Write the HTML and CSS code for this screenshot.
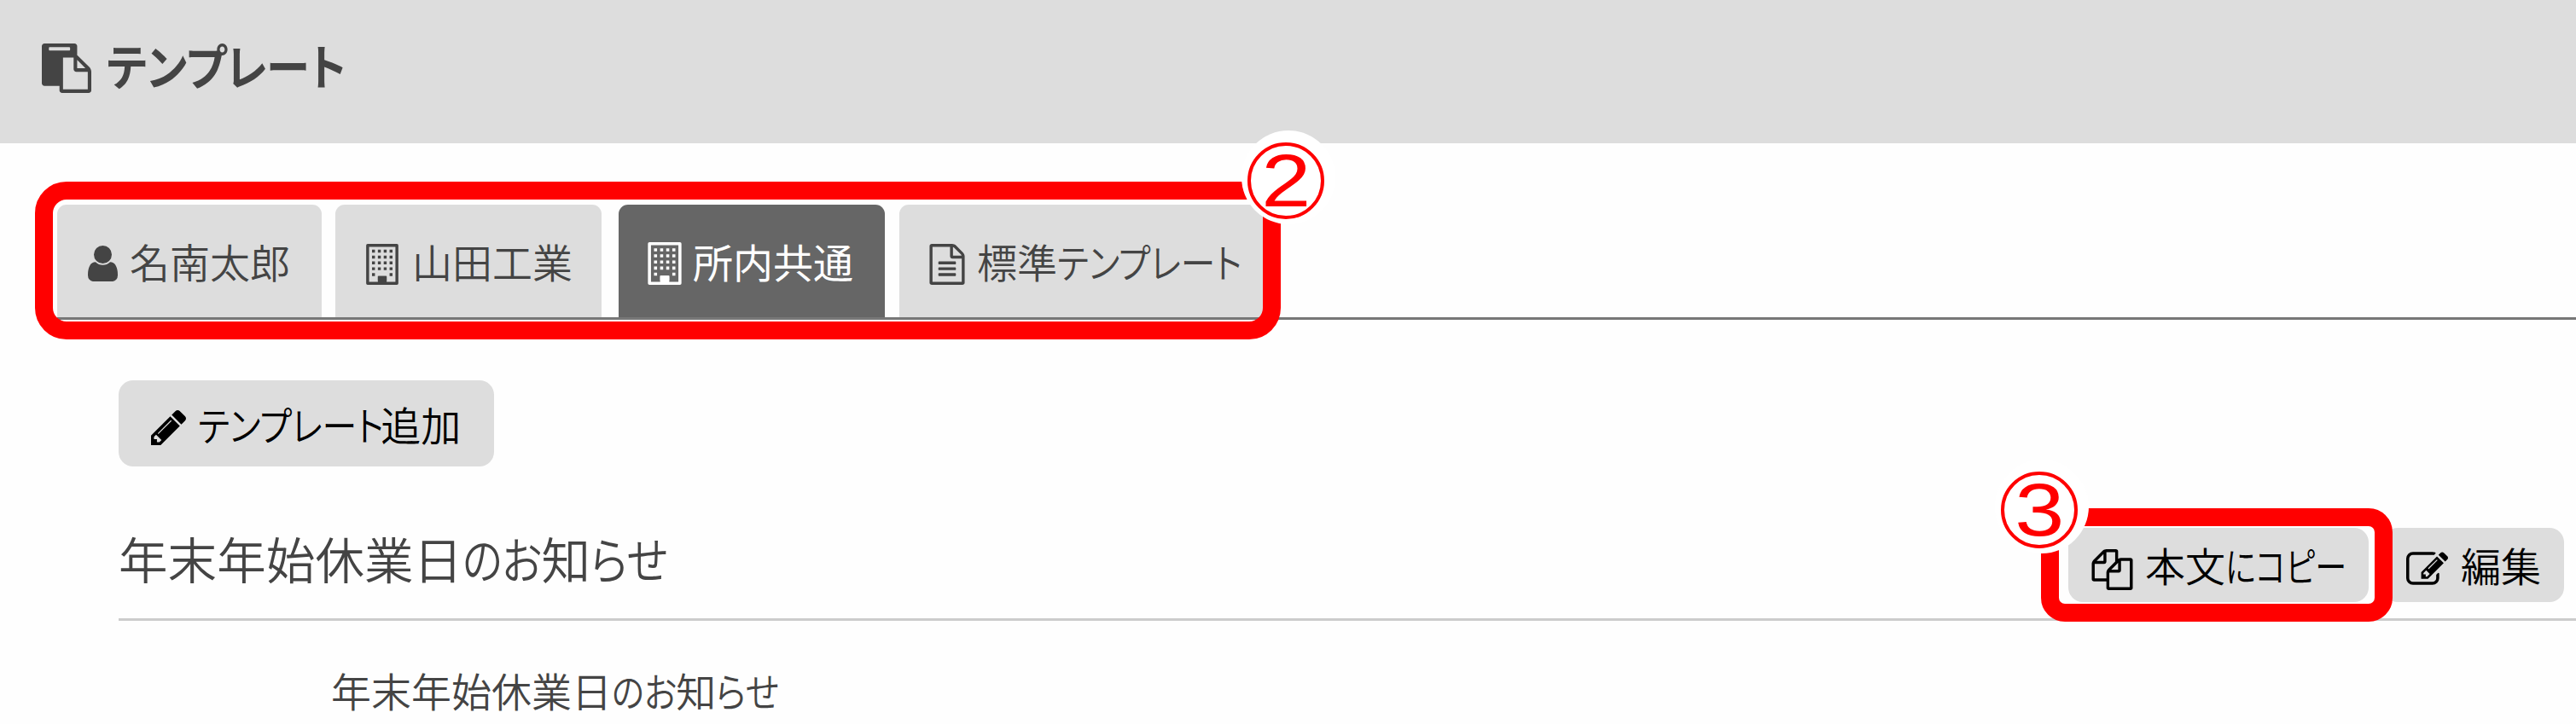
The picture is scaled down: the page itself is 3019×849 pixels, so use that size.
FILE: index.html
```
<!DOCTYPE html>
<html lang="ja">
<head>
<meta charset="utf-8">
<title>テンプレート</title>
<link rel="stylesheet" href="styles.css">
</head>
<body>
<svg class="defs" width="0" height="0">
  <symbol id="building" viewBox="192 0 1408 1792">
    <path fill-rule="evenodd" d="M256 0h1280q64 0 64 64v1664q0 64-64 64h-1280q-64 0-64-64v-1664q0-64 64-64zM320 128v1536h384v-224q0-32 32-32h320q32 0 32 32v224h384v-1536z"/>
    <path d="M704 1408h384v200h-384z"/>
    <path d="M448 256h128v128h-128zM704 256h128v128h-128zM960 256h128v128h-128zM1216 256h128v128h-128zM448 512h128v128h-128zM704 512h128v128h-128zM960 512h128v128h-128zM1216 512h128v128h-128zM448 768h128v128h-128zM704 768h128v128h-128zM960 768h128v128h-128zM1216 768h128v128h-128zM448 1024h128v128h-128zM704 1024h128v128h-128zM960 1024h128v128h-128zM1216 1024h128v128h-128zM448 1280h128v128h-128zM1216 1280h128v128h-128z"/>
  </symbol>
</svg>
<header class="header">
  <svg class="icon icon-paste" viewBox="0 0 1792 1792"><path d="M768 1664h896v-640h-416q-40 0-68-28t-28-68v-416h-384v1152zm256-1440v-64q0-13-9.5-22.5t-22.5-9.5h-704q-13 0-22.5 9.5t-9.5 22.5v64q0 13 9.5 22.5t22.5 9.5h704q13 0 22.5-9.5t9.5-22.5zm256 672h299l-299-299v299zm512 128v672q0 40-28 68t-68 28h-960q-40 0-68-28t-28-68v-160h-544q-40 0-68-28t-28-68v-1344q0-40 28-68t68-28h1088q40 0 68 28t28 68v328q21 13 36 28l408 408q28 28 48 76t20 88z"/></svg>
  <h1 class="title"><span class="kana">テンプレート</span></h1>
</header>
<nav class="tabs">
  <a class="tab tab-user"><svg class="icon icon-user" viewBox="256 128 1280 1536"><path d="M1536 1399q0 109-62.5 187t-150.5 78h-854q-88 0-150.5-78t-62.5-187q0-85 8.5-160.5t31.5-152 58.5-131 94-89 134.5-34.5q131 128 313 128t313-128q76 0 134.5 34.5t94 89 58.5 131 31.5 152 8.5 160.5zm-256-887q0 159-112.5 271.5t-271.5 112.5-271.5-112.5-112.5-271.5 112.5-271.5 271.5-112.5 271.5 112.5 112.5 271.5z"/></svg><span class="label">名南太郎</span></a>
  <a class="tab tab-client"><svg class="icon icon-building"><use href="#building"/></svg><span class="label">山田工業</span></a>
  <a class="tab tab-office active"><svg class="icon icon-building"><use href="#building"/></svg><span class="label">所内共通</span></a>
  <a class="tab tab-standard"><svg class="icon icon-file" viewBox="128 0 1536 1792"><path d="M1596 380q28 28 48 76t20 88v1152q0 40-28 68t-68 28h-1344q-40 0-68-28t-28-68v-1600q0-40 28-68t68-28h896q40 0 88 20t76 48zm-444-244v376h376q-10-29-22-41l-313-313q-12-12-41-22zm384 1528v-1024h-416q-40 0-68-28t-28-68v-416h-768v1536h1280zM512 800q0-32 32-32h704q32 0 32 32v64q0 32-32 32h-704q-32 0-32-32zM512 1056q0-32 32-32h704q32 0 32 32v64q0 32-32 32h-704q-32 0-32-32zM512 1312q0-32 32-32h704q32 0 32 32v64q0 32-32 32h-704q-32 0-32-32z"/></svg><span class="label">標準<span class="kana">テンプレート</span></span></a>
</nav>
<main class="main">
  <button class="button add"><svg class="icon icon-pencil" viewBox="128 149 1515 1515"><path d="M491 1536l91-91-235-235-91 91v107h128v128h107zm523-928q0-22-22-22-10 0-17 7l-542 542q-7 7-7 17 0 22 22 22 10 0 17-7l542-542q7-7 7-17zm-54-192l416 416-832 832h-416v-416zm683 96q0 53-37 90l-166 166-416-416 166-165q36-38 90-38 53 0 91 38l235 234q37 39 37 91z"/></svg><span class="label"><span class="kana k6">テンプレート</span>追加</span></button>
  <section class="row">
    <h2 class="heading">年末年始休業日<span class="kana k2">のお</span>知<span class="kana">らせ</span></h2>
    <div class="actions">
      <button class="button copy"><svg class="icon icon-files" viewBox="0 0 1792 1792"><path d="M1696 384q40 0 68 28t28 68v1216q0 40-28 68t-68 28h-960q-40 0-68-28t-28-68v-288h-544q-40 0-68-28t-28-68v-672q0-40 20-88t48-76l408-408q28-28 76-48t88-20h416q40 0 68 28t28 68v328q68-40 128-40h416zm-544 213l-299 299h299v-299zm-640-384l-299 299h299v-299zm196 647l316-316v-416h-384v416q0 40-28 68t-68 28h-416v640h512v-256q0-40 20-88t48-76zm956 804v-1152h-384v416q0 40-28 68t-68 28h-416v640h896z"/></svg><span class="label">本文<span class="kana k4">にコピー</span></span></button>
      <button class="button edit"><svg class="icon icon-edit" viewBox="0 128 1784 1408"><path d="M888 1184l116-116-152-152-116 116v56h96v96h56zm440-720q-16-16-33 1l-350 350q-17 17-1 33t33-1l350-350q17-17 1-33zm80 594v190q0 119-84.5 203.5t-203.5 84.5h-832q-119 0-203.5-84.5t-84.5-203.5v-832q0-119 84.5-203.5t203.5-84.5h832q63 0 117 25 15 7 18 23 3 17-9 29l-49 49q-14 14-32 8-23-6-45-6h-832q-66 0-113 47t-47 113v832q0 66 47 113t113 47h832q66 0 113-47t47-113v-126q0-13 9-22l64-64q15-15 35-7t20 29zm-96-738l288 288-672 672h-288v-288zm444 132l-92 92-288-288 92-92q28-28 68-28t68 28l152 152q28 28 28 68t-28 68z"/></svg><span class="label">編集</span></button>
    </div>
  </section>
  <p class="body-text">年末年始休業日<span class="kana k2">のお</span>知<span class="kana">らせ</span></p>
</main>
<div class="callout callout-tabs"></div>
<div class="callout callout-copy"></div>
<div class="badge badge-two"><div class="ring"><span class="digit">2</span></div></div>
<div class="badge badge-three"><div class="ring"><span class="digit">3</span></div></div>
</body>
</html>
```

FILE: styles.css
```
* { box-sizing: border-box; }
body {
  margin: 0;
  position: relative;
  width: 3019px;
  height: 849px;
  overflow: hidden;
  background: #fefefe;
  color: #444;
  font-family: "Noto Sans CJK JP", sans-serif;
  font-size: 47px;
  font-weight: 350;
  white-space: nowrap;
}
.defs { display: block; position: absolute; }
.icon { display: block; flex: none; fill: currentColor; }
.kana {
  display: inline-block;
  font-feature-settings: "palt";
  transform: scaleX(.87);
  transform-origin: left;
}
.k2 { transform: scaleX(.84); margin-right: -.32em; }
.k4 { transform: scaleX(.79); }
.k6 { margin-right: -36px; }
.header {
  display: flex;
  align-items: flex-start;
  height: 168px;
  padding: 51px 0 0 49px;
  background: #ddd;
}
.icon-paste { width: 58px; height: 58px; }
.title { margin: -6px 0 0 18px; font-size: 57px; line-height: 60px; font-weight: 700; }
.title .kana { transform: scaleX(.9); }
.tabs {
  display: flex;
  margin-left: 67px;
  padding-top: 72px;
  border-bottom: 3px solid #777;
}
.tab {
  display: flex;
  align-items: center;
  height: 132px;
  background: #ddd;
  border-radius: 11px 11px 0 0;
}
.tab .label { line-height: 60px; margin-top: -1px; }
.tab .kana { transform: scaleX(.865); }
.tab-user { width: 310px; padding-left: 36px; margin-right: 16px; }
.tab-client { width: 312px; padding-left: 36px; margin-right: 20px; }
.tab-office { width: 312px; padding-left: 34px; margin-right: 17px; }
.tab-standard { width: 429px; padding-left: 35px; }
.active { background: #666; color: #fff; font-weight: 400; }
.icon-user { width: 35px; height: 42px; margin: 6px 14px 0 0; }
.icon-building { width: 38px; height: 48px; margin: 7px 16px 0 0; }
.active .icon-building { width: 40px; height: 50px; margin: 5px 13px 0 0; }
.icon-file { width: 42px; height: 48px; margin: 7px 14px 0 0; }
.main { padding: 71px 0 0 139px; }
.button {
  display: flex;
  align-items: center;
  border: 0;
  border-radius: 17px;
  background: #ddd;
  color: #000;
  font: inherit;
}
.button .label { line-height: 60px; margin-top: -2px; }
.add { width: 440px; height: 101px; padding: 0 0 0 38px; }
.add .label { margin-top: 0; }
.icon-pencil { width: 41px; height: 41px; margin: 10px 14px 0 0; }
.row {
  display: flex;
  justify-content: space-between;
  align-items: flex-start;
  height: 181px;
  padding: 72px 14px 0 0;
  border-bottom: 3px solid #ccc;
}
.heading { margin: 0; font-size: 57.6px; line-height: 70px; font-weight: inherit; }
.actions { display: flex; gap: 17px; }
.copy { width: 352px; height: 87px; padding: 0 0 0 27px; }
.edit { width: 212px; height: 87px; padding: 0 0 0 27px; }
.icon-files { width: 49px; height: 48px; margin: 10px 14px 0 0; }
.icon-edit { width: 49px; height: 39px; margin: 7px 15px 0 0; }
.body-text { margin: 51px 0 0 249px; line-height: 60px; }
.callout { position: absolute; border: 21px solid #f00; }
.callout-tabs { left: 41px; top: 213px; width: 1460px; height: 185px; border-radius: 37px; }
.callout-copy { left: 2392px; top: 596px; width: 412px; height: 133px; border-radius: 28px; }
.badge {
  position: absolute;
  width: 110px;
  height: 110px;
  padding: 14px 0 0 7px;
  border-radius: 50%;
  background: #fff;
  color: #f00;
}
.badge-two { left: 1455px; top: 153px; }
.badge-three { left: 2338px; top: 539px; }
.ring {
  display: flex;
  align-items: center;
  justify-content: center;
  width: 90px;
  height: 90px;
  border: 4px solid #f00;
  border-radius: 50%;
}
.digit {
  font-family: "Liberation Sans", sans-serif;
  font-size: 87px;
  font-weight: 400;
  line-height: 82px;
  transform: scaleX(1.2);
}
```
